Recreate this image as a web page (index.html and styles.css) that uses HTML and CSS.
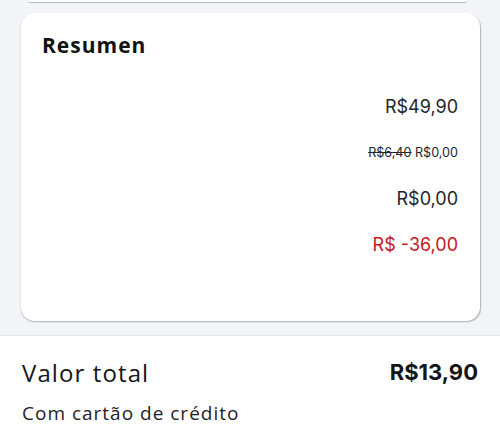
FILE: index.html
```html
<!DOCTYPE html>
<html lang="pt">
<head>
<meta charset="utf-8">
<link rel="stylesheet" href="styles.css">
</head>
<body>
<div class="prev-card"></div>
<section class="card">
  <h2 class="title">Resumen</h2>
  <div class="rows">
    <div class="row"><span class="price">R$49,90</span></div>
    <div class="row"><span class="small"><s>R$6,40</s> R$0,00</span></div>
    <div class="row"><span class="price">R$0,00</span></div>
    <div class="row"><span class="price red">R$ -36,00</span></div>
  </div>
</section>
<footer class="total">
  <div class="total-line">
    <span class="total-label">Valor total</span>
    <span class="total-value">R$13,90</span>
  </div>
  <div class="total-sub">Com cartão de crédito</div>
</footer>
</body>
</html>
```
FILE: styles.css
```css
html, body {
  margin: 0;
  padding: 0;
}
body {
  width: 500px;
  height: 444px;
  overflow: hidden;
  background: #f3f4f8;
  font-family: "Open Sans", "Noto Sans", sans-serif;
  color: #1b1d20;
  display: flex;
  flex-direction: column;
}
.prev-card {
  height: 2px;
  margin: 0 33px 0 28px;
  background: #fff;
  border-radius: 0 0 10px 10px;
  box-shadow: 0 1px 1px rgba(0,0,0,0.25);
  flex: none;
}
.card {
  margin: 11px 20px 0 21px;
  height: 308px;
  box-sizing: border-box;
  background: #fff;
  border-radius: 14px;
  box-shadow: 0.5px 1px 1.5px rgba(0,0,0,0.28);
  padding: 20px 22px 0 21px;
  flex: none;
}
.title {
  margin: 0;
  font-size: 21px;
  font-weight: 700;
  line-height: 24px;
  color: #111;
  letter-spacing: 1px;
}
.rows {
  margin-top: 37px;
  display: flex;
  flex-direction: column;
  gap: 22px;
}
.row {
  display: flex;
  justify-content: flex-end;
  height: 24px;
  align-items: center;
}
.price {
  font-family: Inter, "Liberation Sans", sans-serif;
  font-size: 18px;
  color: #22262b;
}
.small {
  font-family: Inter, "Liberation Sans", sans-serif;
  font-size: 12.6px;
  color: #22262b;
}
.red {
  color: #c8161d;
}
.total {
  margin-top: 14px;
  flex: 1;
  background: #fff;
  border-top: 1px solid #e8e9ec;
  padding: 20px 22px 0 22px;
}
.total-line {
  display: flex;
  justify-content: space-between;
  align-items: center;
  height: 32px;
}
.total-label {
  font-size: 24px;
  letter-spacing: 1.1px;
  color: #141618;
}
.total-value {
  font-family: Inter, "Liberation Sans", sans-serif;
  font-weight: 700;
  font-size: 22px;
  color: #141618;
}
.total-sub {
  margin-top: 12px;
  font-size: 19px;
  letter-spacing: 1px;
  line-height: 26px;
  color: #1f2226;
}
```
